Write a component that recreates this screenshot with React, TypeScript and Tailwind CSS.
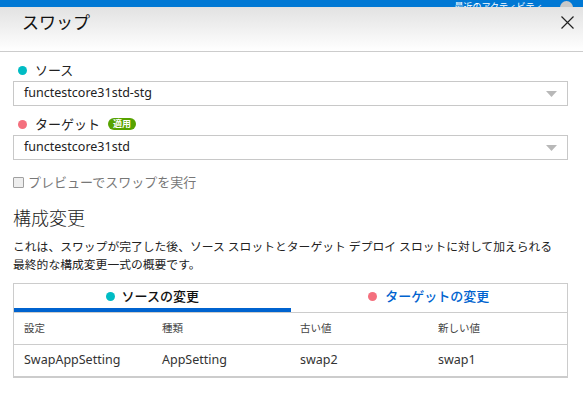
import React from "react";

const font = { fontFamily: '"Noto Sans", "Noto Sans CJK JP", sans-serif' };

function Chevron() {
  return (
    <svg width="11" height="6" viewBox="0 0 11 6" className="shrink-0">
      <path d="M0 0 L11 0 L5.5 6 Z" fill="#b8b8b8" />
    </svg>
  );
}

function Select({ value }: { value: string }) {
  return (
    <div className="h-[25px] border border-[#c8c8c8] bg-white flex items-center justify-between pl-[10px] pr-[10px]">
      <span className="text-[12.5px] text-[#222] leading-none">{value}</span>
      <Chevron />
    </div>
  );
}

export default function App() {
  return (
    <div className="w-[583px] h-[398px] bg-white overflow-hidden relative" style={font}>
      {/* top blue bar */}
      <div className="h-[7px] bg-[#0078d4] overflow-hidden flex justify-end items-end pr-[10px]">
        <span className="text-white text-[9px] leading-[12px] mb-[-6px] mr-[17px]">最近のアクティビティ</span>
        <span className="w-[13px] h-[13px] rounded-full bg-[#c8c8c8] mb-[-7px]" />
      </div>
      {/* header */}
      <div className="h-[45px] bg-gradient-to-b from-[#e2e2e2] to-white flex items-start justify-between pl-[22px] pr-[9px] border-b border-[#cccccc]">
        <span className="text-[17px] text-[#111] leading-none mt-[7px]">スワップ</span>
        <svg width="13" height="13" viewBox="0 0 13 13" className="mt-[9px]">
          <path d="M0.5 0.5 L12.5 12.5 M12.5 0.5 L0.5 12.5" stroke="#222" strokeWidth="1.2" />
        </svg>
      </div>
      {/* content */}
      <div className="pl-[13px] pr-[15px]">
        <div className="h-[29px] flex items-center gap-[8px] pt-[9px] pb-[1px] pl-[5px]">
          <span className="w-[9px] h-[9px] rounded-full bg-[#00bcc4]" />
          <span className="text-[13px] text-[#222] leading-none">ソース</span>
        </div>
        <Select value="functestcore31std-stg" />
        <div className="h-[29px] flex items-center gap-[8px] pt-[7px] pl-[5px]">
          <span className="w-[9px] h-[9px] rounded-full bg-[#f4707e]" />
          <span className="text-[13px] text-[#222] leading-none">ターゲット</span>
          <span className="h-[12px] px-[5px] rounded-full bg-[#57a300] text-white text-[9px] font-bold leading-[12px]">適用</span>
        </div>
        <Select value="functestcore31std" />
        <div className="h-[22px] mt-[11px] flex items-center gap-[4px]">
          <span className="w-[11px] h-[11px] border border-[#a0a0a0] bg-[#eeeeee] rounded-[1px]" />
          <span className="text-[13px] text-[#777] leading-none">プレビューでスワップを実行</span>
        </div>
        <div className="mt-[13px] h-[24px] flex items-center">
          <span className="text-[18px] text-[#222] font-light leading-none">構成変更</span>
        </div>
        <p className="mt-[7px] text-[11.8px] leading-[18px] text-[#222]">
          これは、スワップが完了した後、ソース スロットとターゲット デプロイ スロットに対して加えられる
          <br />
          最終的な構成変更一式の概要です。
        </p>
        <div className="mt-[10px] border border-[#cccccc] border-b-2">
          <div className="h-[29px] grid grid-cols-2 border-b border-[#cccccc]">
            <div className="flex flex-col">
              <div className="flex-1 flex items-center justify-center gap-[7px]">
                <span className="w-[9px] h-[9px] rounded-full bg-[#00bcc4]" />
                <span className="text-[13px] text-[#111] font-medium leading-none">ソースの変更</span>
              </div>
              <div className="h-[4px] bg-[#0063cf]" />
            </div>
            <div className="flex items-center justify-center gap-[8px] pb-[4px]">
              <span className="w-[9px] h-[9px] rounded-full bg-[#f4707e]" />
              <span className="text-[13px] text-[#0063cf] font-medium leading-none">ターゲットの変更</span>
            </div>
          </div>
          <div className="h-[32px] grid grid-cols-[138px_138px_138px_1fr] items-center pl-[10px] border-b border-[#cccccc] text-[10.5px] text-[#444]">
            <span>設定</span>
            <span>種類</span>
            <span>古い値</span>
            <span>新しい値</span>
          </div>
          <div className="h-[31px] grid grid-cols-[138px_138px_138px_1fr] items-center pl-[10px] text-[12.5px] text-[#333]">
            <span>SwapAppSetting</span>
            <span>AppSetting</span>
            <span>swap2</span>
            <span>swap1</span>
          </div>
        </div>
      </div>
    </div>
  );
}
